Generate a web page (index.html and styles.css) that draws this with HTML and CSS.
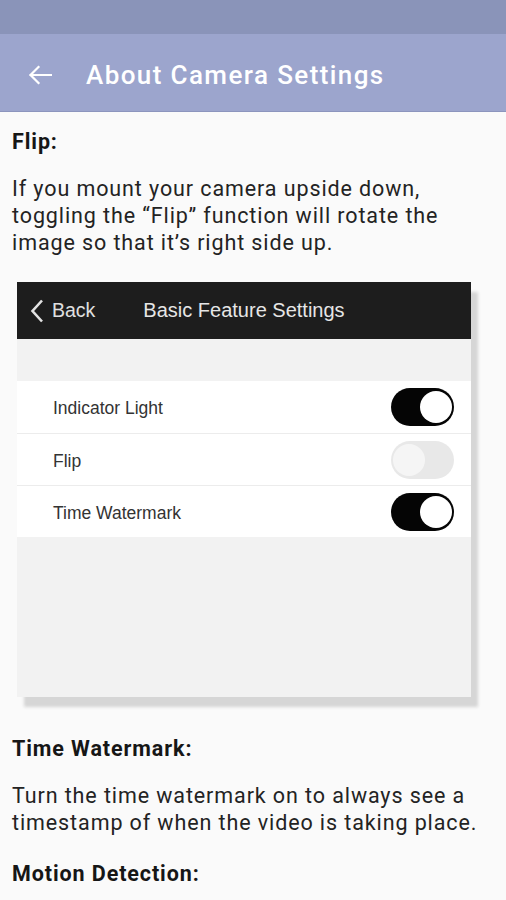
FILE: index.html
```html
<!DOCTYPE html>
<html lang="en">
<head>
<meta charset="utf-8">
<title>About Camera Settings</title>
<link rel="stylesheet" href="styles.css">
</head>
<body>
<div class="status-bar"></div>
<header class="app-bar">
  <svg class="back-arrow" width="24" height="20" viewBox="0 0 24 20" aria-hidden="true">
    <path d="M23 10H2.5M10.5 2L2.5 10L10.5 18" fill="none" stroke="#fff" stroke-width="2.2" stroke-linecap="square"/>
  </svg>
  <h1 class="app-title">About Camera Settings</h1>
</header>
<main class="content">
  <h2 class="section-title">Flip:</h2>
  <p class="section-text">If you mount your camera upside down, toggling the “Flip” function will rotate the image so that it’s right side up.</p>

  <div class="shot">
    <div class="shot-bar">
      <span class="shot-back">
        <svg width="14" height="24" viewBox="0 0 14 24" aria-hidden="true">
          <path d="M12 1.5L2.5 12L12 22.5" fill="none" stroke="#e2e2e2" stroke-width="2.6"/>
        </svg>
        Back
      </span>
      <span class="shot-title">Basic Feature Settings</span>
    </div>
    <div class="shot-gap"></div>
    <div class="shot-list">
      <div class="shot-row">
        <span class="shot-label">Indicator Light</span>
        <span class="toggle on"><span class="knob"></span></span>
      </div>
      <div class="shot-row">
        <span class="shot-label">Flip</span>
        <span class="toggle off"><span class="knob"></span></span>
      </div>
      <div class="shot-row">
        <span class="shot-label">Time Watermark</span>
        <span class="toggle on"><span class="knob"></span></span>
      </div>
    </div>
    <div class="shot-fill"></div>
  </div>

  <h2 class="section-title after-shot">Time Watermark:</h2>
  <p class="section-text">Turn the time watermark on to always see a timestamp of when the video is taking place.</p>

  <h2 class="section-title">Motion Detection:</h2>
</main>
</body>
</html>
```

FILE: styles.css
```css
* { box-sizing: border-box; }

html, body {
  margin: 0;
  padding: 0;
  background: #fafafa;
}

body {
  font-family: Roboto, "Noto Sans", "Liberation Sans", sans-serif;
  color: #1f1f1f;
  width: 506px;
  height: 900px;
  overflow: hidden;
}

.status-bar {
  height: 34px;
  background: #8a94b9;
}

.app-bar {
  height: 78px;
  background: #9ca5cd;
  border-bottom: 1px solid #8c95bd;
  display: flex;
  align-items: center;
  padding: 4px 0 0 28px;
}

.back-arrow {
  display: block;
  flex: none;
}

.app-title {
  margin: 0 0 0 34px;
  font-size: 26px;
  font-weight: 500;
  color: #ffffff;
  line-height: 30px;
  letter-spacing: 1.4px;
}

.content {
  padding: 0 12px;
}

.section-title {
  margin: 16px 0 0;
  font-size: 21.5px;
  line-height: 27px;
  font-weight: 700;
  letter-spacing: 0.9px;
  color: #161616;
}

.section-text {
  margin: 20px 0 0;
  font-size: 21.5px;
  line-height: 27px;
  font-weight: 400;
  letter-spacing: 0.9px;
  color: #232323;
}

.section-text + .section-title {
  margin-top: 24px;
}

.section-title.after-shot {
  margin-top: 38px;
}

/* embedded screenshot */
.shot {
  margin: 26px 0 0 5px;
  width: 454px;
  background: #f2f2f2;
  box-shadow: 7px 10px 3px #d6d6d6;
  font-family: "Liberation Sans", Arial, sans-serif;
}

.shot-bar {
  height: 57px;
  background: #1d1d1d;
  display: flex;
  align-items: center;
  padding-left: 13px;
}

.shot-back {
  display: flex;
  align-items: center;
  gap: 8px;
  font-size: 19.5px;
  color: #e0e0e0;
}

.shot-back svg {
  display: block;
}

.shot-title {
  margin-left: 48px;
  font-size: 20px;
  color: #e6e6e6;
}

.shot-gap {
  height: 42px;
}

.shot-list {
  background: #ffffff;
}

.shot-row {
  height: 52px;
  display: flex;
  align-items: center;
  justify-content: space-between;
  padding: 3px 17px 0 36px;
  border-top: 1px solid #ececec;
}

.shot-row:first-child {
  border-top: none;
}

.shot-label {
  font-size: 17.5px;
  color: #333333;
}

.toggle {
  position: relative;
  display: block;
  width: 63px;
  height: 38px;
  margin-top: -3px;
  border-radius: 19px;
}

.toggle .knob {
  position: absolute;
  top: 3px;
  width: 32px;
  height: 32px;
  border-radius: 50%;
}

.toggle.on {
  background: #050505;
}

.toggle.on .knob {
  right: 2px;
  background: #ffffff;
}

.toggle.off {
  background: #e8e8e8;
}

.toggle.off .knob {
  left: 2px;
  background: #f5f5f5;
}

.shot-fill {
  height: 160px;
}
```
